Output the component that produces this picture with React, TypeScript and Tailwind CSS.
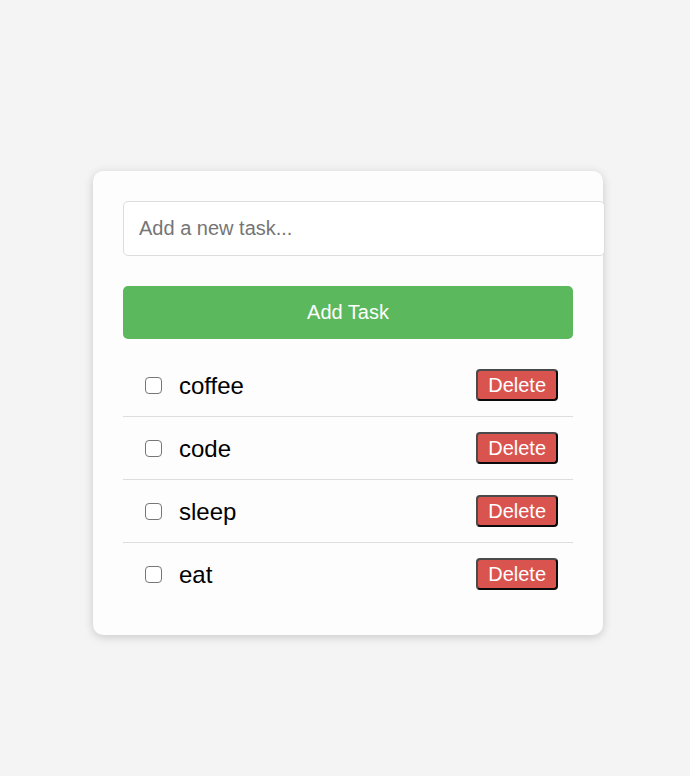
import React from "react";

const tasks = ["coffee", "code", "sleep", "eat"];

const TaskRow = ({ label, last }: { label: string; last: boolean }) => {
    return (
        <li className={`flex items-center pl-[22px] pr-[15px] ${last ? "h-[62px]" : "h-[63px] border-b border-[#dddddd]"}`}>
            <span className="box-border h-[17px] w-[17px] shrink-0 rounded-[4px] border-[1.5px] border-[#767676] bg-white" />
            <span className="ml-[17px] flex-1 pt-[1px] text-[24px] text-black">{label}</span>
            <button className="h-[32px] rounded-[4px] border-2 border-t-[#4a4a4a] border-l-[#4a4a4a] border-r-[#0a0a0a] border-b-[#0a0a0a] bg-[#d9534f] px-[10px] text-[20px] leading-none text-white">
                Delete
            </button>
        </li>
    );
};

export default function App() {
    return (
        <div className="min-h-[776px] bg-[#f4f4f4] pt-[171px] pl-[93px]" style={{ fontFamily: '"Liberation Sans", Arial, sans-serif' }}>
            <div className="w-[510px] rounded-[10px] bg-[#fdfdfd] p-[30px] shadow-[0_2px_10px_rgba(0,0,0,0.18)]">
                <input
                    type="text"
                    placeholder="Add a new task..."
                    className="box-content block h-[23px] w-[450px] rounded-[5px] border border-[#dddddd] bg-white px-[15px] pt-[14px] pb-[16px] text-[20px] outline-none placeholder:text-[#757575]"
                />
                <button className="mt-[30px] block h-[53px] w-[450px] rounded-[5px] bg-[#5cb85c] pb-[2px] text-[20px] text-white">
                    Add Task
                </button>
                <ul className="mt-[15px]">
                    {tasks.map((t, i) => (
                        <TaskRow key={t} label={t} last={i === tasks.length - 1} />
                    ))}
                </ul>
            </div>
        </div>
    );
}
